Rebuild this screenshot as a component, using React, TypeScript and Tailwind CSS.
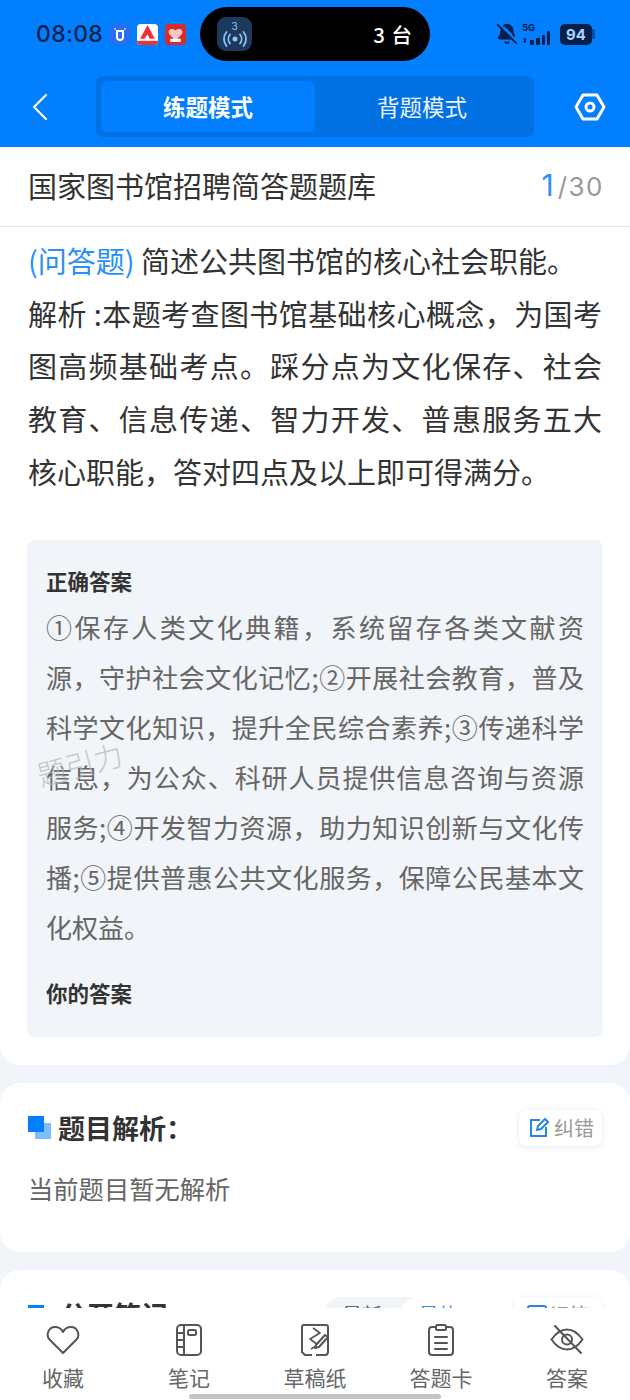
import React from "react";
import { BellOff } from "lucide-react";

const ff = "font-['Noto_Sans_CJK_SC','Noto_Sans',sans-serif]";

function Sec({ title, right }: { title: string; right: React.ReactNode }) {
  return (
    <div className="flex items-center justify-between">
      <div className="flex items-center">
        <div className="relative h-[23px] w-[23px] shrink-0">
          <div className="absolute left-[7px] top-[7px] h-[16px] w-[16px] bg-[#7fbdff]" />
          <div className="absolute left-0 top-0 h-[16px] w-[16px] bg-[#027ffe]" />
        </div>
        <span className="ml-[7px] text-[27px] font-bold leading-[36px] text-[#333333]">{title}</span>
      </div>
      {right}
    </div>
  );
}

const Heart = () => (
  <svg width="34" height="30" viewBox="0 0 34 30" fill="none" stroke="#555" strokeWidth="2">
    <path d="M17 28 L3.5 14.5 C-0.5 10 2.5 2 9 2 C12.5 2 15.5 4 17 7 C18.5 4 21.5 2 25 2 C31.5 2 34.5 10 30.5 14.5 Z" strokeLinejoin="round" />
  </svg>
);
const Note = () => (
  <svg width="28" height="34" viewBox="0 0 28 34" fill="none" stroke="#555" strokeWidth="2">
    <rect x="2" y="2" width="24" height="30" rx="4" />
    <path d="M9 2V32M2 10H9M2 17H9M2 24H9" />
    <rect x="13" y="7" width="8" height="5" rx="1.5" />
  </svg>
);
const Draft = () => (
  <svg width="30" height="34" viewBox="0 0 30 34" fill="none" stroke="#555" strokeWidth="2" strokeLinejoin="round">
    <path d="M12 32H5l-3-3V4a2 2 0 0 1 2-2h22a2 2 0 0 1 2 2v25a3 3 0 0 1-3 3h-9" />
    <path d="M13 5l7 5-10 6 8 6-7 4" strokeWidth="1.6" />
    <path d="M16 22l9-10 3 2-9 10-4 1z" fill="#fff" />
  </svg>
);
const Card = () => (
  <svg width="28" height="34" viewBox="0 0 28 34" fill="none" stroke="#555" strokeWidth="2" strokeLinecap="round">
    <path d="M9 4H5a3 3 0 0 0-3 3v22a3 3 0 0 0 3 3h18a3 3 0 0 0 3-3V7a3 3 0 0 0-3-3h-4" />
    <rect x="9" y="2" width="10" height="5" rx="1.5" />
    <path d="M8 14H20M8 20H20M8 26H20" />
  </svg>
);
const Eye = () => (
  <svg width="34" height="30" viewBox="0 0 34 30" fill="none" stroke="#555" strokeWidth="2" strokeLinecap="round">
    <path d="M1.5 14.5C6 8 11 4.5 17 4.5S28 8 32.5 14.5C28 21 23 24.5 17 24.5S6 21 1.5 14.5Z" />
    <circle cx="17" cy="14.5" r="5" />
    <path d="M5 1L31 28" stroke="#555" />
  </svg>
);

function Tab({ icon, label }: { icon: React.ReactNode; label: string }) {
  return (
    <div className="flex w-[126px] flex-col items-center">
      <div className="flex h-[36px] items-center justify-center">{icon}</div>
      <span className="mt-[4px] text-[21px] leading-[30px] text-[#666666]">{label}</span>
    </div>
  );
}

export default function App() {
  return (
    <div className={`relative flex h-[1400px] w-[630px] flex-col overflow-hidden bg-[#f1f4f8] ${ff}`}>
      {/* header */}
      <div className="h-[147px] shrink-0 bg-[#027ffe]">
        <div className="flex h-[76px] items-start pl-[36px] pr-[35px] pt-[7px]">
          <div className="flex h-[54px] w-[164px] items-center">
            <span className="font-['Inter',sans-serif] text-[23px] font-medium tracking-[0.3px] text-[#06204a]">08:08</span>
            <div className="ml-[7px] flex h-[20px] w-[20px] items-center justify-center rounded-[5px] bg-[#2a6df0]">
              <svg width="12" height="13" viewBox="0 0 12 13" fill="none" stroke="#fff" strokeWidth="2"><path d="M1 0.5V1.5M11 0.5V1.5M2 3H10M3 3V9a3 3 0 0 0 6 0V3" /></svg>
            </div>
            <div className="ml-[7px] flex h-[21px] w-[21px] items-end justify-center overflow-hidden rounded-[4px] bg-white">
              <svg width="21" height="21" viewBox="0 0 20 20"><path d="M3 14L10 1l7 13H12l-2-4-3 4z" fill="#e8323c" /><rect y="16" width="20" height="4" fill="#e8323c" /></svg>
            </div>
            <div className="ml-[7px] flex h-[21px] w-[21px] items-center justify-center rounded-[4px] bg-[#d92b2b]">
              <svg width="17" height="17" viewBox="0 0 16 16"><path d="M8 14L2 7.5C0 4 3.5 1 8 4c4.5-3 8 0 6 3.5z" fill="#f6c9c0" /><path d="M3 12h10v3H3z" fill="#fff" /></svg>
            </div>
          </div>
          <div className="flex h-[54px] w-[230px] items-center justify-between rounded-[27px] bg-black pl-[17px] pr-[17px]">
            <div className="flex h-[34px] w-[35px] flex-col items-center justify-center rounded-[9px] bg-[#1d3a5c]">
              <span className="font-['Inter',sans-serif] text-[10px] leading-[10px] text-[#8cc4f5]">3</span>
              <svg width="24" height="16" viewBox="0 0 24 16" fill="none" stroke="#8cc4f5" strokeWidth="1.8" strokeLinecap="round">
                <circle cx="12" cy="8" r="2.5" fill="#8cc4f5" stroke="none" />
                <path d="M7 3.5a7 7 0 0 0 0 9M17 3.5a7 7 0 0 1 0 9M3.5 1a11 11 0 0 0 0 14M20.5 1a11 11 0 0 1 0 14" />
              </svg>
            </div>
            <span className="text-[20.5px] font-medium tracking-[1px] text-white">3 台</span>
          </div>
          <div className="ml-auto flex h-[54px] items-center">
            <BellOff size={22} fill="#06204a" stroke="#06204a" strokeWidth={2} />
            <div className="ml-[4px] flex h-[22px] w-[34px] flex-col justify-between">
              <span className="font-['Inter',sans-serif] text-[9.5px] font-bold leading-[9px] text-[#06204a]">5G</span>
              <div className="-mt-[2px] flex h-[14px] items-end gap-[2px]">
                <span className="mr-[1px] w-[5px] text-[7px] leading-[9px] text-[#06204a]">⬍</span>
                <span className="h-[5px] w-[4px] rounded-[1px] bg-[#06204a]" />
                <span className="h-[7px] w-[4px] rounded-[1px] bg-[#06204a]" />
                <span className="h-[10px] w-[3px] rounded-[1px] bg-[#06204a]" />
                <span className="h-[14px] w-[3px] rounded-[1px] bg-[#06204a]" />
              </div>
            </div>
            <div className="ml-[4px] flex h-[21px] w-[32px] items-center justify-center rounded-[5px] bg-[#06204a]">
              <span className="font-['Inter',sans-serif] text-[15px] font-bold leading-none text-[#a8d4ff]">94</span>
            </div>
            <div className="h-[10px] w-[3px] rounded-r-[2px] bg-[#0a4e9c]" />
          </div>
        </div>
        <div className="flex h-[61px] items-center pl-[32px] pr-[24px]">
          <svg width="16" height="28" viewBox="0 0 16 28" fill="none" stroke="#fff" strokeWidth="2.2" strokeLinecap="round" strokeLinejoin="round">
            <path d="M14 2L2 14L14 26" />
          </svg>
          <div className="ml-[48px] flex h-[61px] w-[438px] rounded-[7px] bg-[#0271e3] p-[5px]">
            <div className="flex flex-1 items-center justify-center rounded-[7px] bg-[#027ffe] text-[22.5px] font-bold text-white">练题模式</div>
            <div className="flex w-[214px] items-center justify-center text-[22.5px] text-[#eaf4ff]">背题模式</div>
          </div>
          <svg className="ml-auto" width="32" height="28" viewBox="0 0 32 28" fill="none" stroke="#fff" strokeWidth="3" strokeLinejoin="round">
            <path d="M9 2H23L30 14L23 26H9L2 14Z" />
            <circle cx="16" cy="14" r="4" />
          </svg>
        </div>
      </div>

      {/* scroll area */}
      <div className="min-h-0 flex-1 overflow-hidden">
        <div className="rounded-b-[20px] bg-white pb-[28px]">
          <div className="flex h-[80px] items-center justify-between border-b border-[#e5e5e5] pb-[3px] pl-[28px] pr-[26px]">
            <span className="text-[29px] leading-[40px] text-[#333333]">国家图书馆招聘简答题题库</span>
            <span className="flex items-baseline font-['Inter',sans-serif]">
              <span className="text-[30px] text-[#2a8ff7]">1</span>
              <span className="ml-[4px] text-[26px] tracking-[1.5px] text-[#999999]">/30</span>
            </span>
          </div>
          <div className="px-[28px] pt-[7px] text-[29px] leading-[52.7px] text-[#333333]">
            <div><span className="text-[#2a8ff7]">(问答题)</span> 简述公共图书馆的核心社会职能。</div>
            <div className="text-justify">解析 :本题考查图书馆基础核心概念，为国考图高频基础考点。踩分点为文化保存、社会教育、信息传递、智力开发、普惠服务五大核心职能，答对四点及以上即可得满分。</div>
          </div>
          <div className="relative mx-[27px] mt-[42px] h-[497px] rounded-[8px] bg-[#f1f4f8] px-[19px] pt-[25px]">
            <div className="text-[21.5px] font-bold leading-[31px] text-[#333333]">正确答案</div>
            <div className="mt-[6px] text-justify text-[26px] leading-[50px] text-[#666666]">
              ①保存人类文化典籍，系统留存各类文献资源，守护社会文化记忆;②开展社会教育，普及科学文化知识，提升全民综合素养;③传递科学信息，为公众、科研人员提供信息咨询与资源服务;④开发智力资源，助力知识创新与文化传播;⑤提供普惠公共文化服务，保障公民基本文化权益。
            </div>
            <div className="mt-[25px] text-[21.5px] font-bold leading-[32px] text-[#333333]">你的答案</div>
            <div className="absolute left-[9px] top-[206px] -rotate-[15deg] text-[29px] font-light leading-[34px] text-[#b9bcc1] opacity-80">题引力</div>
          </div>
        </div>

        <div className="mt-[18px] h-[169px] rounded-[20px] bg-white px-[28px] pt-[27px]">
          <Sec
            title="题目解析："
            right={
              <div className="flex h-[36px] w-[83px] items-center justify-center rounded-[8px] bg-white pl-[2px] shadow-[0_1px_6px_rgba(0,0,0,0.1)]">
                <svg width="20" height="21" viewBox="0 0 20 21" fill="none" stroke="#2a85e0" strokeWidth="2">
                  <path d="M11 3H2v16h15v-9" />
                  <path d="M8 13l1-4 7-7 3 3-7 7z" />
                </svg>
                <span className="ml-[5px] text-[20px] leading-none text-[#999999]">纠错</span>
              </div>
            }
          />
          <div className="mt-[24px] text-[25.3px] leading-[36px] text-[#666666]">当前题目暂无解析</div>
        </div>

        <div className="mt-[18px] rounded-t-[20px] bg-white px-[28px] pt-[27px]">
          <div className="flex items-start justify-between">
            <div className="flex items-start">
              <div className="mt-[8px] h-[16px] w-[16px] bg-[#027ffe]" />
              <span className="ml-[16px] text-[27px] font-bold leading-[36px] text-[#333333]">公开笔记</span>
            </div>
            <div className="flex items-center">
              <div className="flex h-[36px] w-[153px] rounded-[18px] bg-[#f1f4f8] text-[20px]">
                <span className="flex w-[76px] items-center justify-center text-[#666666]">最新</span>
                <span className="flex w-[77px] items-center justify-center rounded-[18px] bg-white text-[#2a8ff7]">最热</span>
              </div>
              <div className="ml-[37px] flex h-[36px] w-[88px] items-center justify-center rounded-[8px] bg-white text-[20px] text-[#999999] shadow-[0_1px_6px_rgba(0,0,0,0.08)]">
                <span className="mr-[3px] h-[20px] w-[20px] rounded-[3px] border-2 border-[#2a85e0]" />
                记笔
              </div>
            </div>
          </div>
        </div>
      </div>

      {/* bottom bar */}
      <div className="flex h-[92px] shrink-0 bg-white pt-[14px]">
        <Tab icon={<Heart />} label="收藏" />
        <Tab icon={<Note />} label="笔记" />
        <Tab icon={<Draft />} label="草稿纸" />
        <Tab icon={<Card />} label="答题卡" />
        <Tab icon={<Eye />} label="答案" />
      </div>
      <div className="absolute bottom-[1px] left-[189px] h-[5px] w-[252px] rounded-[3px] bg-[#c4c4c4]" />
    </div>
  );
}
